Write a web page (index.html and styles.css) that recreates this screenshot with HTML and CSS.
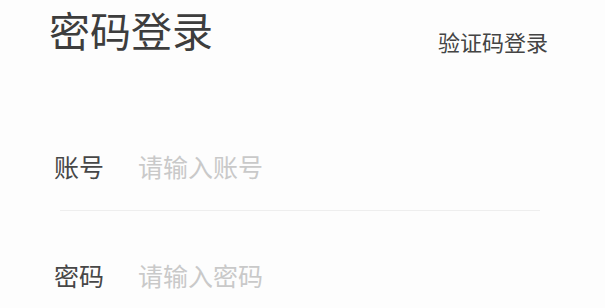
FILE: index.html
```html
<!DOCTYPE html>
<html lang="zh-CN">
<head>
<meta charset="utf-8">
<title>密码登录</title>
<link rel="stylesheet" href="styles.css">
</head>
<body>
<div class="page">
  <header class="header">
    <h1 class="title">密码登录</h1>
    <a class="switch">验证码登录</a>
  </header>
  <form class="form">
    <div class="field field-account">
      <label class="label">账号</label>
      <input class="input" type="text" placeholder="请输入账号">
    </div>
    <div class="divider"></div>
    <div class="field field-password">
      <label class="label">密码</label>
      <input class="input" type="password" placeholder="请输入密码">
    </div>
  </form>
</div>
</body>
</html>
```

FILE: styles.css
```css
html, body {
  margin: 0;
  padding: 0;
  background: #fdfdfd;
}
body {
  font-family: "Noto Sans CJK SC", "Noto Sans", sans-serif;
  width: 605px;
  height: 308px;
  overflow: hidden;
}
.page {
  display: flex;
  flex-direction: column;
}
.header {
  display: flex;
  justify-content: space-between;
  align-items: flex-start;
  padding: 9px 57px 0 49px;
  height: 64px;
  box-sizing: border-box;
}
.title {
  margin: 0;
  font-size: 41px;
  line-height: 41px;
  font-weight: 400;
  color: #3d3d3d;
}
.switch {
  margin-top: 21px;
  font-size: 22px;
  line-height: 22px;
  color: #444;
}
.form {
  display: flex;
  flex-direction: column;
  margin: 0;
}
.field {
  display: flex;
  align-items: center;
  padding-left: 54px;
}
.field-account {
  height: 88px;
  margin-top: 58px;
}
.field-password {
  height: 88px;
  margin-top: 20px;
}
.label {
  width: 84px;
  font-size: 25px;
  line-height: 25px;
  color: #474747;
}
.input {
  border: none;
  outline: none;
  background: transparent;
  padding: 0;
  margin: 0;
  font-family: "Noto Sans CJK SC", "Noto Sans", sans-serif;
  font-size: 25px;
  line-height: 25px;
  height: 30px;
  width: 380px;
  color: #333;
}
.input::placeholder {
  color: #c9c9c9;
}
.divider {
  height: 1px;
  margin: 0 65px 0 60px;
  background: #eeeeee;
}
```
